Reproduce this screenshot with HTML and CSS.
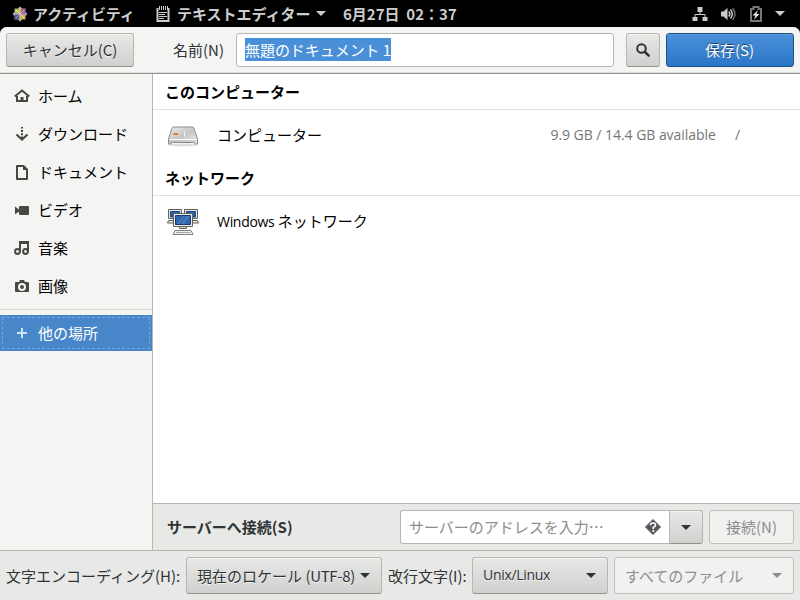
FILE: index.html
```html
<!DOCTYPE html>
<html lang="ja">
<head>
  <meta charset="UTF-8">
  <meta name="viewport" content="width=device-width, initial-scale=1.0">
  <title>テキストエディター</title>
  <link rel="stylesheet" href="styles.css">
</head>
<body>
  <div class="topbar">
    <div class="activities">
      <svg class="distro" width="16" height="16" viewBox="0 0 16 16">
        <path fill="#b9a2b4" d="M8 .5L10 2.500H13.500V6L15.500 8 13.500 10V13.500H10L8 15.500 6 13.500H2.500V10L.5 8l2-2V2.500H6z"/>
        <path fill="#a5cf4a" d="M3 3h4.600v4.600H3z"/>
        <path fill="#a8578f" d="M8.400 3H13v4.600H8.400z"/>
        <path fill="#efa740" d="M8.400 8.400H13V13H8.400z"/>
        <path fill="#4d4c9a" d="M3 8.400h4.600V13H3z"/>
        <path fill="#e9c35f" d="M7.300 1h1.400v5H7.300z"/>
        <path fill="#9ccd6a" d="M7.300 10h1.400v5H7.300z"/>
        <path fill="#c58db8" d="M1 7.300h5v1.400H1z"/>
        <path fill="#8a86c4" d="M10 7.300h5v1.400h-5z"/>
        <path stroke="#f0ece4" stroke-width=".6" d="M4 4l8 8M12 4l-8 8"/>
      </svg>
      <span>アクティビティ</span>
    </div>
    <div class="app-menu">
      <svg width="14" height="16" viewBox="0 0 14 16">
        <path fill="none" stroke="#ccc" stroke-width="2" d="M1.500 2v13h11V2"/>
        <path fill="none" stroke="#ccc" d="M3.500 0v4M5.500 0v4M7.500 0v4M9.500 0v4M11.500 0v4M3 6.500h8M3 8.500h6M3 10.500h8M3 12.500h5"/>
      </svg>
      <span>テキストエディター</span>
      <i class="arrow"></i>
    </div>
    <div class="clock">6月27日&nbsp; 02：37</div>
    <div class="status">
      <svg width="16" height="16" viewBox="0 0 16 16">
        <path fill="#ccc" d="M5.500 1h5v5h-5zM.5 11h5v4h-5zM10.500 11h5v4h-5z"/>
        <path fill="none" stroke="#ccc" d="M8 6v2.500M3 11V8.500h10V11"/>
      </svg>
      <svg width="16" height="16" viewBox="0 0 16 16">
        <path fill="#ccc" d="M1 5.500h2.500L7.500 2v12l-4-3.500H1z"/>
        <path fill="none" stroke="#ccc" stroke-width="1.500" d="M8.800 5.500q2 2.500 0 5M10.500 3.500q3.500 4.500 0 9"/>
        <path fill="none" stroke="#666" stroke-width="1.600" d="M12.700 2q4.400 6 0 12"/>
      </svg>
      <svg class="battery" width="12" height="16" viewBox="0 0 12 16">
        <path fill="none" stroke="#777" stroke-width="2" d="M1 3h2.500V1h5v2H11v12H1z"/>
        <path fill="#eee" d="M8 4L2.500 9.500H5.500L4 13.500l5.500-5.500h-3z"/>
      </svg>
      <i class="arrow"></i>
    </div>
  </div>

  <div class="dialog">
    <div class="header">
      <button class="button cancel">キャンセル(C)</button>
      <label class="name-label" for="name">名前(N)</label>
      <div class="entry name-entry" id="name"><span class="selection">無題のドキュメント 1</span></div>
      <button class="button search">
        <svg width="16" height="16" viewBox="0 0 16 16">
          <circle cx="6.500" cy="6.500" r="4.300" fill="none" stroke="#2e3436" stroke-width="2"/>
          <path stroke="#2e3436" stroke-width="2.500" stroke-linecap="round" d="M10 10l3.700 3.700"/>
        </svg>
      </button>
      <button class="button save">保存(S)</button>
    </div>

    <div class="content">
      <div class="sidebar">
        <div class="place">
          <svg width="16" height="16" viewBox="0 0 16 16">
            <path fill="none" stroke="#474744" stroke-width="2" d="M.7 8.500L8 2.500l7.300 6M3 8v5h10V8"/>
            <path fill="#474744" d="M6.500 9h3v4h-3z"/>
          </svg>
          <span>ホーム</span>
        </div>
        <div class="place">
          <svg width="16" height="16" viewBox="0 0 16 16">
            <path fill="none" stroke="#474744" stroke-width="2.200" d="M2.500 8.500L8 13.500l5.500-5"/>
            <path fill="#474744" d="M7 1h2v1.500H7zM7 4h2v2H7zM7 7.300h2v2H7zM7 10.500h2v2H7z"/>
          </svg>
          <span>ダウンロード</span>
        </div>
        <div class="place">
          <svg width="16" height="16" viewBox="0 0 16 16">
            <path fill="none" stroke="#474744" stroke-width="2" stroke-linejoin="round" d="M3 2h6.500L13 5.500V15H3z"/>
            <path fill="#474744" d="M9 2v4h4z"/>
          </svg>
          <span>ドキュメント</span>
        </div>
        <div class="place">
          <svg width="16" height="16" viewBox="0 0 16 16">
            <path fill="#474744" d="M6 4h8a1 1 0 0 1 1 1v7a1 1 0 0 1-1 1H6a1 1 0 0 1-1-1V5a1 1 0 0 1 1-1zM1 4.500l4 3v2l-4 3z"/>
          </svg>
          <span>ビデオ</span>
        </div>
        <div class="place">
          <svg width="16" height="16" viewBox="0 0 16 16">
            <path fill="none" stroke="#474744" stroke-width="2" d="M6 11.500V2h8v9.500"/>
            <path stroke="#474744" d="M6 3.500h8"/>
            <circle cx="3.500" cy="11.500" r="2.400" fill="none" stroke="#474744" stroke-width="2"/>
            <circle cx="11.500" cy="11.500" r="2.400" fill="none" stroke="#474744" stroke-width="2"/>
          </svg>
          <span>音楽</span>
        </div>
        <div class="place">
          <svg width="16" height="16" viewBox="0 0 16 16">
            <path fill="#474744" d="M2 4h3l1-2h4l1 2h3a1 1 0 0 1 1 1v8a1 1 0 0 1-1 1H2a1 1 0 0 1-1-1V5a1 1 0 0 1 1-1z"/>
            <circle cx="8" cy="9" r="3" fill="#474744" stroke="#f4f4f2" stroke-width="2"/>
          </svg>
          <span>画像</span>
        </div>
        <div class="separator"></div>
        <div class="place selected">
          <svg width="16" height="16" viewBox="0 0 16 16">
            <path stroke="#cfe1f4" stroke-width="2" d="M8 3v10M3 8h10"/>
          </svg>
          <span>他の場所</span>
        </div>
      </div>

      <div class="main">
        <div class="list">
          <h2 class="group">このコンピューター</h2>
          <div class="row">
            <svg width="32" height="32" viewBox="0 0 32 32">
              <defs>
                <linearGradient id="disk" x1="0" y1="0" x2="1" y2="1">
                  <stop offset="0" stop-color="#eeeeec"/>
                  <stop offset=".5" stop-color="#c6c6c4"/>
                  <stop offset="1" stop-color="#ededeb"/>
                </linearGradient>
              </defs>
              <ellipse cx="16" cy="26" rx="15" ry="1.500" fill="#ddd"/>
              <path fill="url(#disk)" stroke="#8e8e89" d="M6.500 8h19q1 0 1.400 1l3.600 11v5h-2.500l-1-1.500H5L4 25H1.500v-5l3.600-11q.4-1 1.400-1z"/>
              <path fill="none" stroke="#fff" d="M2.500 20.500h27"/>
              <path fill="#c4c4c1" d="M2.500 21.500h27v1h-27z"/>
              <path fill="#d9813f" d="M6.500 14H11v2H6z"/>
              <path stroke="#f4f4f4" d="M17.500 12.500v5"/>
              <path fill="#777" d="M20 23h4v1h-4z"/>
            </svg>
            <span class="row-name">コンピューター</span>
            <span class="space">9.9 GB / 14.4 GB available</span>
            <span class="mount">/</span>
          </div>
          <h2 class="group network">ネットワーク</h2>
          <div class="row">
            <svg width="32" height="32" viewBox="0 0 32 32">
              <g stroke="#60635b">
                <path fill="#e4e5df" d="M1.500 4.500h13v9h-13zM17.500 4.500h13v9h-13z"/>
                <path fill="#285ba3" stroke="#204a87" d="M3.500 6.500h9v5.500h-9zM19.500 6.500h9v5.500h-9z"/>
                <path fill="#e4e5df" d="M1.500 15.500h5v2.500h-6zM25.500 15.500h5l1 2.500h-6z"/>
                <path fill="#eeeeec" d="M6.500 8.500h19v13h-19z"/>
                <path fill="#2f65b0" stroke="#173a70" d="M8.500 10.500h15v9h-15z"/>
                <path fill="#d3d7cf" d="M12.500 21.500h7v2h-7z"/>
              </g>
              <path fill="#eeeeec" stroke="#80837b" d="M8 25.500h16l2 4H6z"/>
              <path fill="#5d8ac6" d="M10 19l6-8h2l-6 8zM14 19l6-8h3l-6 8z" opacity=".6"/>
              <path stroke="#a5a7a0" d="M9 27.500h14"/>
            </svg>
            <span class="row-name"><span class="latin">Windows</span> ネットワーク</span>
          </div>
        </div>

        <div class="server">
          <label class="server-label">サーバーへ接続(S)</label>
          <div class="address">
            <div class="entry address-entry">
              <span>サーバーのアドレスを入力…</span>
              <svg width="16" height="16" viewBox="0 0 16 16">
                <path fill="#50565a" stroke="#50565a" stroke-linejoin="round" d="M8 .5L15.500 8 8 15.500.5 8z"/>
                <path fill="none" stroke="#fff" stroke-width="1.700" d="M5.500 6.200Q5.500 4 8 4t2.500 2.200Q10.500 7.500 8.300 8.300V10"/>
                <path fill="#fff" d="M7.300 11h2v1.800h-2z"/>
              </svg>
            </div>
            <button class="button drop"><i class="arrow"></i></button>
          </div>
          <button class="button connect" disabled>接続(N)</button>
        </div>
      </div>
    </div>

    <div class="footer">
      <label class="encoding-label">文字エンコーディング(H):</label>
      <button class="button combo encoding"><span>現在のロケール <span class="charset">(UTF-8)</span></span><i class="arrow"></i></button>
      <label class="newline-label">改行文字(I):</label>
      <button class="button combo newline"><span class="latin">Unix/Linux</span><i class="arrow"></i></button>
      <button class="button combo filter" disabled><span>すべてのファイル</span><i class="arrow"></i></button>
    </div>
  </div>
</body>
</html>
```
FILE: styles.css
```css
:root {
  --text: #2e3436;
  --border: #b6b6b3;
  --blue: #4a90d9;
  --base: #e8e8e7;
}
* {
  box-sizing: border-box;
}
body {
  margin: 0;
  width: 800px;
  height: 600px;
  overflow: hidden;
  background: #000;
  color: var(--text);
  font-family: "Noto Sans CJK JP", sans-serif;
  font-size: 15px;
  line-height: 22px;
  white-space: nowrap;
}
svg {
  display: block;
  flex: none;
}
.arrow {
  flex: none;
  border: 5px solid transparent;
  border-top-color: currentColor;
  border-bottom: 0;
}
.latin {
  font-family: "Open Sans", sans-serif;
  font-size: 14px;
  letter-spacing: -.3px;
}

/* top panel */
.topbar {
  display: flex;
  align-items: center;
  height: 27px;
  padding: 0 15px 0 12px;
  color: #ccc;
  font-weight: bold;
}
.activities {
  display: flex;
  align-items: center;
  gap: 5px;
  width: 144px;
  letter-spacing: -.1px;
}
.app-menu {
  display: flex;
  align-items: center;
  gap: 6px;
  width: 187px;
}
.app-menu span {
  margin-left: 1px;
  margin-right: -1px;
}
.clock {
  flex: 1;
}
.status {
  display: flex;
  align-items: center;
  gap: 12px;
}
.battery {
  margin: 0 1px 0 2px;
}

/* dialog */
.dialog {
  display: flex;
  flex-direction: column;
  height: 573px;
  overflow: hidden;
  border-radius: 7px 7px 0 0;
  background: var(--base);
}
.header {
  display: flex;
  align-items: center;
  height: 47px;
  padding: 0 6px;
  background: #f4f4f3;
  border-bottom: 1px solid #94948e;
  box-shadow: inset 0 -1px #dededb;
}
.button {
  display: flex;
  align-items: center;
  justify-content: center;
  flex: none;
  height: 34px;
  padding: 0;
  border: 1px solid var(--border);
  border-bottom-color: #91918c;
  border-radius: 3px;
  background: linear-gradient(#e8e8e7, #d0d0ce);
  box-shadow: inset 0 1px #f5f5f4;
  color: var(--text);
  font: inherit;
  text-shadow: 0 1px rgba(255, 255, 255, .7);
}
.button:disabled {
  border-color: #bfbfbc;
  background: #f1f1f0;
  box-shadow: none;
  color: #8b8e8f;
  text-shadow: none;
}
.cancel {
  width: 128px;
}
.name-label {
  width: 90px;
  margin-right: 12px;
  text-align: right;
}
.entry {
  display: flex;
  align-items: center;
  height: 34px;
  padding: 0 8px;
  border: 1px solid var(--border);
  border-radius: 3px;
  background: #fff;
}
.name-entry {
  width: 378px;
  margin-right: 12px;
  padding-bottom: 1px;
}
.selection {
  height: 23px;
  line-height: 23px;
  letter-spacing: -.05px;
  background: var(--blue);
  color: #fff;
}
.search {
  width: 34px;
  margin-right: 6px;
}
.save {
  width: 128px;
  padding-right: 1px;
  border-color: #1c5187;
  background: linear-gradient(#4a90d9, #2a76c6);
  box-shadow: inset 0 1px #5b9bdc;
  color: #fff;
  text-shadow: 0 -1px rgba(0, 0, 0, .5);
}
.content {
  display: flex;
  height: 476px;
}

/* places */
.sidebar {
  width: 153px;
  padding-top: 3px;
  background: #f4f4f2;
  border-right: 1px solid var(--border);
  color: #000;
}
.place {
  display: flex;
  align-items: center;
  gap: 8px;
  height: 38px;
  padding-left: 14px;
}
.separator {
  height: 1px;
  margin: 4px 0 5px;
  background: #d9d9d6;
}
.selected {
  height: 36px;
  background: #4786c9;
  color: #fff;
  outline: 1px dashed #77a5d7;
  outline-offset: -3px;
}

/* locations */
.main {
  display: flex;
  flex-direction: column;
  flex: 1;
}
.list {
  flex: 1;
  background: #fff;
  color: #000;
}
.group {
  height: 36px;
  margin: 0;
  padding: 7px 12px 0;
  border-bottom: 1px solid #e1e1e0;
  font-size: 15px;
  line-height: 22px;
}
.row {
  display: flex;
  align-items: center;
  height: 50px;
  padding: 0 60px 0 14px;
}
.row-name {
  flex: 1;
  margin-left: 18px;
}
.space,
.mount {
  color: #757575;
  font-family: "Open Sans", sans-serif;
  font-size: 14px;
  letter-spacing: -.04px;
}
.mount {
  margin-left: 19px;
}
.server {
  display: flex;
  align-items: center;
  height: 47px;
  padding: 0 6px 0 14px;
  border-top: 1px solid var(--border);
  background: var(--base);
}
.server-label {
  flex: 1;
  font-weight: bold;
}
.address {
  display: flex;
  margin-right: 6px;
}
.address-entry {
  justify-content: space-between;
  width: 269px;
  border-right: 0;
  border-radius: 3px 0 0 3px;
  color: #8b8e8f;
}
.drop {
  width: 34px;
  border-radius: 0 3px 3px 0;
}
.connect {
  width: 85px;
}

/* save options */
.footer {
  display: flex;
  align-items: center;
  height: 50px;
  padding: 0 6px;
  border-top: 1px solid var(--border);
}
.encoding-label {
  width: 180px;
}
.newline-label {
  width: 84px;
}
.combo {
  justify-content: space-between;
  height: 37px;
  padding: 0 11px 0 10px;
}
.charset {
  letter-spacing: -.3px;
}
.encoding {
  width: 196px;
  margin-right: 6px;
}
.newline {
  width: 136px;
  margin-right: 6px;
}
.newline .latin {
  margin-top: -2px;
}
.filter {
  width: 180px;
}
```
